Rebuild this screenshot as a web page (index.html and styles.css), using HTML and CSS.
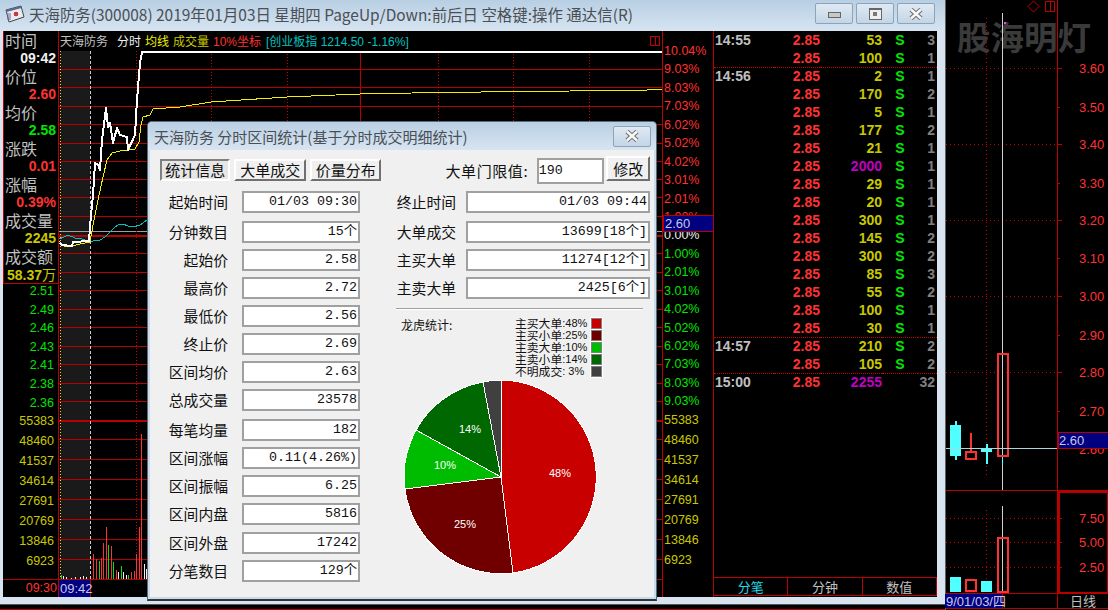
FILE: index.html
```html
<!DOCTYPE html>
<html lang="zh-CN">
<head>
  <meta charset="UTF-8">
  <title>天海防务 分时区间统计</title>
  <link rel="stylesheet" href="styles.css">
</head>
<body>
<div class="page">
  <div class="left-part">
    <div class="window">
      <div class="titlebar">
        <svg class="app-icon" width="20" height="18" viewBox="0 0 20 18">
          <path d="M1 5 L16 1 L19 12 L4 17 Z" fill="#e8e8f0" stroke="#444"/>
          <path d="M1 5 L16 1 L16.6 3 L1.6 7 Z" fill="#5a6a90"/>
          <circle cx="11" cy="9" r="3" fill="#c04040" stroke="#fff"/>
          <path d="M3 8v7M5 8v7" stroke="#6070a0"/>
        </svg>
        <span class="title-text">天海防务(300008) 2019年01月03日 星期四 PageUp/Down:前后日 空格键:操作 通达信(R)</span>
        <div class="win-btns">
          <div class="win-btn"><i class="glyph-min"></i></div>
          <div class="win-btn"><i class="glyph-max"></i></div>
          <div class="win-btn">
            <svg width="14" height="12" viewBox="0 0 14 12"><path d="M2 1.5 L12 10.5 M12 1.5 L2 10.5" stroke="#666" stroke-width="4.4"/><path d="M2 1.5 L12 10.5 M12 1.5 L2 10.5" stroke="#f8f8f8" stroke-width="2.6"/></svg>
          </div>
        </div>
      </div>

      <div class="client">
        <div class="side">
          <div class="quote">
            <div class="q-label">时间</div><div class="q-val white">09:42</div>
            <div class="q-label">价位</div><div class="q-val red">2.60</div>
            <div class="q-label">均价</div><div class="q-val green">2.58</div>
            <div class="q-label">涨跌</div><div class="q-val red">0.01</div>
            <div class="q-label">涨幅</div><div class="q-val red">0.39%</div>
            <div class="q-label">成交量</div><div class="q-val olive">2245</div>
            <div class="q-label">成交额</div><div class="q-val olive">58.37<span class="wan">万</span></div>
          </div>
          <ul class="scale">
            <li class="green">2.51</li><li class="green">2.49</li><li class="green">2.46</li><li class="green">2.43</li><li class="green">2.41</li><li class="green">2.38</li><li class="green">2.36</li>
            <li class="olive v">55383</li><li class="olive v">48460</li><li class="olive v">41537</li><li class="olive v">34614</li><li class="olive v">27691</li><li class="olive v">20769</li><li class="olive v">13846</li><li class="olive v">6923</li>
          </ul>
          <div class="time-left">09:30</div>
        </div>

        <svg class="chart" width="604" height="566" viewBox="59 31 604 566" shape-rendering="crispEdges">
          <rect x="60" y="51" width="30" height="528" fill="#1a1a1a"/>
          <!-- price grid -->
          <g stroke="#b80000" stroke-width="1">
            <path d="M59 69.5H662M59 87.5H662M59 106.5H662M59 124.5H662M59 143.5H662M59 161.5H662M59 179.5H662M59 197.5H662M59 216.5H662"/>
            <path d="M59 253.5H662M59 272.5H662M59 290.5H662M59 309.5H662M59 327.5H662M59 346.5H662M59 364.5H662M59 383.5H662M59 401.5H662"/>
            <path d="M59 439.5H662M59 459.5H662M59 479.5H662M59 499.5H662M59 519.5H662M59 539.5H662M59 559.5H662"/>
          </g>
          <path d="M59 235.5H662M59 420.5H662" stroke="#b80000" stroke-width="2"/>
          <path d="M59 231.5H662" stroke="#a0a0a0"/>
          <!-- time grid -->
          <g stroke="#d00000" stroke-dasharray="1 2">
            <path d="M136.5 51V579M211.5 51V579M287.5 51V579M438.5 51V579M513.5 51V579M589.5 51V579"/>
          </g>
          <path d="M360.5 51V579" stroke="#b80000"/>
          <path d="M60.5 51V579" stroke="#e0e040" stroke-dasharray="1 2"/>
          <path d="M90.5 51V579" stroke="#c8c8e0" stroke-dasharray="3 2"/>
          <path d="M662.5 31V597" stroke="#c00000"/>
          <path d="M59 579.5H662" stroke="#b80000"/>
          <path d="M90.5 579V597" stroke="#c00000"/>
          <!-- volume bars -->
          <g stroke-width="1">
            <path stroke="#ff3232" d="M93.5 579V554M96.5 579V559M101.5 579V558M103.5 579V543M106.5 579V527M111.5 579V546M116.5 579V570M131.5 579V572M134.5 579V571M136.5 579V554M139.5 579V527M141.5 579V434"/>
            <path stroke="#00e600" d="M61.5 579V575M99.5 579V561M108.5 579V545M113.5 579V562M121.5 579V566M128.5 579V575"/>
            <path stroke="#f0f0f0" d="M63.5 579V576M66.5 579V577M71.5 579V578M75.5 579V577M80.5 579V577M83.5 579V576M86.5 579V577M118.5 579V572M123.5 579V572M126.5 579V575M144.5 579V564M146.5 579V569"/>
          </g>
          <g fill="none" stroke-linejoin="round">
            <path stroke="#00c0c0" d="M59 239L64 237L68 235L75 238L82 239L90 241.5L100 240L105 237L110 232L115 227L118 225L123 224L128 226L133 227L140 225L147 220"/>
            <path stroke="#f0f000" d="M59 241L65 247L72 246L80 244L90 242L93 225L98 200L103 177L107 160L112 153L120 151L135 149L139 142L141 125L143 117L150 115L153 109L180 107L211 102L287 97L360 94L438 92.5L570 91L640 90.5L662 89"/>
            <path stroke="#fff" stroke-width="2" d="M60 243L62 245L72 246L73 242L89 241L91 215L93 195L95 163L98 165L100 170L102 140L106 108L108 127L110 123L113 143L117 128L120 135L127 137L128 150L135 135L137 100L140 63L142 52L662 52"/>
          </g>
          <!-- header -->
          <g class="chart-head" shape-rendering="auto">
            <text x="60" y="46" fill="#c0c0c0">天海防务</text>
            <text x="117" y="46" fill="#f0f0f0">分时</text>
            <text x="145" y="46" fill="#f0f000">均线</text>
            <text x="173" y="46" fill="#c8c800">成交量</text>
            <text x="213" y="46" fill="#ff3232">10%坐标</text>
            <text x="266" y="46" fill="#00c0c0">[创业板指 1214.50 -1.16%]</text>
          </g>
          <rect x="650.5" y="36.5" width="9" height="9" fill="none" stroke="#c00000"/>
          <path d="M655.5 36V46" stroke="#c00000"/>
          <rect x="59" y="580" width="31" height="17" fill="#000080"/>
          <text class="time-cur" x="60" y="593" shape-rendering="auto">09:42</text>
        </svg>

        <ul class="axis">
          <li class="red">10.04%</li><li class="red">9.03%</li><li class="red">8.03%</li><li class="red">7.03%</li><li class="red">6.02%</li><li class="red">5.02%</li><li class="red">4.02%</li><li class="red">3.01%</li><li class="red">2.01%</li><li class="red">1.00%</li>
          <li class="white">0.00%</li>
          <li class="green">1.00%</li><li class="green">2.01%</li><li class="green">3.01%</li><li class="green">4.02%</li><li class="green">5.02%</li><li class="green">6.02%</li><li class="green">7.03%</li><li class="green">8.03%</li><li class="green">9.03%</li>
          <li class="olive v">55383</li><li class="olive v">48460</li><li class="olive v">41537</li><li class="olive v">34614</li><li class="olive v">27691</li><li class="olive v">20769</li><li class="olive v">13846</li><li class="olive v">6923</li>
        </ul>
        <div class="cur-price axis-price">2.60</div>

        <div class="ticks">
          <table class="tick-table">
            <tr><td class="t">14:55</td><td class="p">2.85</td><td class="n">53</td><td class="s">S</td><td class="c">3</td></tr>
            <tr class="sep"><td class="t"></td><td class="p">2.85</td><td class="n">100</td><td class="s">S</td><td class="c">1</td></tr>
            <tr><td class="t">14:56</td><td class="p">2.85</td><td class="n">2</td><td class="s">S</td><td class="c">1</td></tr>
            <tr><td class="t"></td><td class="p">2.85</td><td class="n">170</td><td class="s">S</td><td class="c">2</td></tr>
            <tr><td class="t"></td><td class="p">2.85</td><td class="n">5</td><td class="s">S</td><td class="c">1</td></tr>
            <tr><td class="t"></td><td class="p">2.85</td><td class="n">177</td><td class="s">S</td><td class="c">2</td></tr>
            <tr><td class="t"></td><td class="p">2.85</td><td class="n">21</td><td class="s">S</td><td class="c">1</td></tr>
            <tr><td class="t"></td><td class="p">2.85</td><td class="n big">2000</td><td class="s">S</td><td class="c">1</td></tr>
            <tr><td class="t"></td><td class="p">2.85</td><td class="n">29</td><td class="s">S</td><td class="c">1</td></tr>
            <tr><td class="t"></td><td class="p">2.85</td><td class="n">20</td><td class="s">S</td><td class="c">1</td></tr>
            <tr><td class="t"></td><td class="p">2.85</td><td class="n">300</td><td class="s">S</td><td class="c">1</td></tr>
            <tr><td class="t"></td><td class="p">2.85</td><td class="n">145</td><td class="s">S</td><td class="c">2</td></tr>
            <tr><td class="t"></td><td class="p">2.85</td><td class="n">300</td><td class="s">S</td><td class="c">2</td></tr>
            <tr><td class="t"></td><td class="p">2.85</td><td class="n">85</td><td class="s">S</td><td class="c">3</td></tr>
            <tr><td class="t"></td><td class="p">2.85</td><td class="n">55</td><td class="s">S</td><td class="c">2</td></tr>
            <tr><td class="t"></td><td class="p">2.85</td><td class="n">100</td><td class="s">S</td><td class="c">1</td></tr>
            <tr class="sep"><td class="t"></td><td class="p">2.85</td><td class="n">30</td><td class="s">S</td><td class="c">1</td></tr>
            <tr><td class="t">14:57</td><td class="p">2.85</td><td class="n">210</td><td class="s">S</td><td class="c">2</td></tr>
            <tr class="sep"><td class="t"></td><td class="p">2.85</td><td class="n">105</td><td class="s">S</td><td class="c">2</td></tr>
            <tr><td class="t">15:00</td><td class="p">2.85</td><td class="n big">2255</td><td class="s"></td><td class="c">32</td></tr>
          </table>
          <div class="tick-tabs">
            <div class="tick-tab on">分笔</div>
            <div class="tick-tab">分钟</div>
            <div class="tick-tab">数值</div>
          </div>
        </div>
      </div>

      <div class="dlg">
        <div class="dlg-title">
          <span>天海防务 分时区间统计(基于分时成交明细统计)</span>
          <div class="dlg-close">
            <svg width="16" height="12" viewBox="0 0 16 12"><path d="M3 1.5 L13 10.5 M13 1.5 L3 10.5" stroke="#666" stroke-width="4.4"/><path d="M3 1.5 L13 10.5 M13 1.5 L3 10.5" stroke="#f8f8f8" stroke-width="2.6"/></svg>
          </div>
        </div>
        <div class="dlg-body">
          <div class="dlg-top">
            <button class="tab active">统计信息</button>
            <button class="tab">大单成交</button>
            <button class="tab">价量分布</button>
            <span class="limit-label">大单门限值:</span>
            <div class="limit-input">190</div>
            <button class="tab modify">修改</button>
          </div>
          <div class="dlg-cols">
            <div class="col-left">
              <div class="row"><label>起始时间</label><div class="val">01/03 09:30</div></div>
              <div class="row"><label>分钟数目</label><div class="val">15个</div></div>
              <div class="row"><label>起始价</label><div class="val">2.58</div></div>
              <div class="row"><label>最高价</label><div class="val">2.72</div></div>
              <div class="row"><label>最低价</label><div class="val">2.56</div></div>
              <div class="row"><label>终止价</label><div class="val">2.69</div></div>
              <div class="row"><label>区间均价</label><div class="val">2.63</div></div>
              <div class="row"><label>总成交量</label><div class="val">23578</div></div>
              <div class="row"><label>每笔均量</label><div class="val">182</div></div>
              <div class="row"><label>区间涨幅</label><div class="val">0.11(4.26%)</div></div>
              <div class="row"><label>区间振幅</label><div class="val">6.25</div></div>
              <div class="row"><label>区间内盘</label><div class="val">5816</div></div>
              <div class="row"><label>区间外盘</label><div class="val">17242</div></div>
              <div class="row"><label>分笔数目</label><div class="val">129个</div></div>
            </div>
            <div class="col-right">
              <div class="row"><label>终止时间</label><div class="val">01/03 09:44</div></div>
              <div class="row"><label>大单成交</label><div class="val">13699[18个]</div></div>
              <div class="row"><label>主买大单</label><div class="val">11274[12个]</div></div>
              <div class="row"><label>主卖大单</label><div class="val">2425[6个]</div></div>
              <div class="divider"></div>
              <div class="dragon">
                <div class="dragon-title">龙虎统计:</div>
                <ul class="legend">
                  <li>主买大单<span class="pct">:48%</span><i class="sw s1"></i></li>
                  <li>主买小单<span class="pct">:25%</span><i class="sw s2"></i></li>
                  <li>主卖大单<span class="pct">:10%</span><i class="sw s3"></i></li>
                  <li>主卖小单<span class="pct">:14%</span><i class="sw s4"></i></li>
                  <li>不明成交<span class="pct">: 3%</span><i class="sw s5"></i></li>
                </ul>
              </div>
              <svg class="pie" width="200" height="200" viewBox="401 378 200 200" shape-rendering="crispEdges">
                <g stroke="#fff" stroke-width="1">
                  <path fill="#c80000" d="M501 478V381A97 97 0 0 1 513 574Z"/>
                  <path fill="#700000" d="M501 478L513 574A97 97 0 0 1 405 490Z"/>
                  <path fill="#00bc00" d="M501 478L405 490A97 97 0 0 1 416 431Z"/>
                  <path fill="#006800" d="M501 478L416 431A97 97 0 0 1 483 383Z"/>
                  <path fill="#404040" d="M501 478L483 383A97 97 0 0 1 501 381Z"/>
                </g>
                <g class="pie-label" shape-rendering="auto">
                  <text x="549" y="478">48%</text>
                  <text x="454" y="529">25%</text>
                  <text x="434" y="470">10%</text>
                  <text x="459" y="434">14%</text>
                </g>
              </svg>
            </div>
          </div>
        </div>
      </div>
    </div>
    <div class="bottom-strip"></div>
  </div>

  <svg class="day-chart" width="163" height="610" viewBox="945 0 163 610" shape-rendering="crispEdges">
    <path d="M945.5 0V610" stroke="#606060"/>
    <text class="watermark" x="957" y="50" shape-rendering="auto">股海明灯</text>
    <g stroke="#d00000" stroke-dasharray="1 3">
      <path d="M946 68.5H1057M946 144.5H1057M946 220.5H1057M946 296.5H1057M946 372.5H1057M946 518.5H1057M946 542.5H1057M946 567.5H1057"/>
      <path d="M986.5 18V478M986.5 510V592"/>
    </g>
    <path d="M1002.5 13V490M1002.5 506V593" stroke="#d0d0d0"/>
    <rect x="1004" y="22" width="2" height="2" fill="#ff40ff"/>
    <!-- candles -->
    <path d="M955.5 421V460" stroke="#50ffff" stroke-width="2"/>
    <rect x="950" y="425" width="11" height="31" fill="#50ffff"/>
    <path d="M971 433V451" stroke="#ff3232" stroke-width="2"/>
    <rect x="966" y="452" width="10" height="7" fill="#000" stroke="#ff3232" stroke-width="2"/>
    <path d="M986.5 444V464" stroke="#50ffff" stroke-width="2"/>
    <rect x="981" y="449" width="11" height="3" fill="#50ffff"/>
    <path d="M1002 456V464" stroke="#50ffff" stroke-width="1"/>
    <rect x="997.5" y="353.5" width="10" height="102" fill="none" stroke="#ff3232" stroke-width="2"/>
    <path d="M946 448.5H1057" stroke="#a8d8d8"/>
    <!-- volume -->
    <rect x="950" y="577" width="11" height="15" fill="#50ffff"/>
    <rect x="966" y="580" width="10" height="11" fill="none" stroke="#ff3232" stroke-width="2"/>
    <rect x="981" y="581" width="11" height="11" fill="#50ffff"/>
    <rect x="997.5" y="537.5" width="10" height="54" fill="none" stroke="#ff3232" stroke-width="2"/>
    <!-- frames -->
    <path d="M1057.5 0V593" stroke="#c00000"/>
    <path d="M946 490.5H1108" stroke="#b80000"/>
    <path d="M946 593.5H1108" stroke="#b80000"/>
    <path d="M946 608.5H1108" stroke="#b80000"/>
    <path d="M1002.5 593V608M1057.5 593V608" stroke="#b80000"/>
    <rect x="1058.5" y="491.5" width="49" height="101" fill="none" stroke="#b80000" stroke-width="2"/>
    <path d="M1057 68.5H1062M1057 107.5H1060M1057 144.5H1062M1057 183.5H1060M1057 220.5H1062M1057 258.5H1060M1057 296.5H1062M1057 335.5H1060M1057 372.5H1062M1057 411.5H1060M1057 518.5H1062M1057 542.5H1062M1057 567.5H1062" stroke="#c00000"/>
    <g class="day-axis" shape-rendering="auto">
      <text x="1079" y="73">3.60</text><text x="1079" y="112">3.50</text><text x="1079" y="149">3.40</text>
      <text x="1079" y="188">3.30</text><text x="1079" y="225">3.20</text><text x="1079" y="263">3.10</text>
      <text x="1079" y="301">3.00</text><text x="1079" y="340">2.90</text><text x="1079" y="377">2.80</text>
      <text x="1079" y="416">2.70</text><text x="1079" y="454">2.60</text>
      <text x="1079" y="523">7.50</text><text x="1079" y="547">5.00</text><text x="1079" y="572">2.50</text>
    </g>
    <rect x="1058" y="432.5" width="50" height="16" fill="#000080" stroke="#b80000"/>
    <text class="box-text" x="1059" y="445" shape-rendering="auto">2.60</text>
    <rect x="945" y="594" width="57" height="14" fill="#000080"/>
    <text class="box-text" x="946" y="606" shape-rendering="auto">9/01/03/四</text>
    <text class="day-tab" x="1070" y="606" shape-rendering="auto">日线</text>
    <path d="M1033.5 1L1039 6.5L1033.5 12L1028 6.5Z" fill="none" stroke="#c00000" shape-rendering="auto"/>
    <rect x="1045.5" y="1.5" width="9" height="10" fill="none" stroke="#c00000"/>
    <path d="M1050.5 1V12" stroke="#c00000"/>
  </svg>
</div>
</body>
</html>
```

FILE: styles.css
```css
* {
  box-sizing: border-box;
}
html, body {
  margin: 0;
  padding: 0;
  background: #000;
  overflow: hidden;
}
body {
  width: 1108px;
  height: 610px;
  font-family: "Noto Sans CJK SC", "Liberation Sans", sans-serif;
}
ul {
  list-style: none;
  margin: 0;
  padding: 0;
}
svg {
  display: block;
}
.page {
  display: flex;
  height: 610px;
}
.left-part {
  width: 945px;
}
.day-chart {
  flex: none;
}

.red { color: #ff3232; }
.green { color: #00e600; }
.white { color: #f0f0f0; }
.olive { color: #c8c800; }

/* main window */
.window {
  position: relative;
  width: 945px;
  height: 604px;
  padding: 0 8px 7px 3px;
  background: #d8e4f0;
  display: flex;
  flex-direction: column;
}
.bottom-strip {
  height: 6px;
  background: #000;
  border-top: 1px solid #555;
  border-bottom: 1px solid #b80000;
}
.titlebar {
  height: 31px;
  margin: 0 -8px 0 -3px;
  padding: 0 10px 4px 5px;
  background: linear-gradient(#b8cfe3, #d6e4f1);
  display: flex;
  align-items: center;
}
.app-icon {
  flex: none;
  margin-right: 4px;
}
.title-text {
  font-size: 15.45px;
  color: #4a4f55;
  white-space: nowrap;
}
.win-btns {
  margin-left: auto;
  display: flex;
  gap: 3px;
}
.win-btn {
  width: 38px;
  height: 21px;
  border: 1px solid #8da3ba;
  border-radius: 2px;
  background: linear-gradient(#dfe9f3, #c4d5e6);
  display: flex;
  align-items: center;
  justify-content: center;
}
.glyph-min {
  display: block;
  width: 13px;
  height: 6px;
  margin-top: 3px;
  background: #c8c8c8;
  border: 1px solid #666;
}
.glyph-max {
  display: flex;
  align-items: center;
  justify-content: center;
  width: 13px;
  height: 12px;
  border: 1px solid #666;
  border-top-width: 2px;
  background: #eee;
}
.glyph-max::after {
  content: "";
  width: 4px;
  height: 4px;
  background: #777;
}

.client {
  position: relative;
  flex: 1;
  display: flex;
  background: #000;
}

/* left quote column */
.side {
  width: 56px;
  flex: none;
  position: relative;
  border-right: 1px solid #c00000;
}
.quote {
  height: 253px;
  border-left: 1px solid #c00000;
  border-bottom: 1px solid #c00000;
}
.q-label {
  height: 18px;
  line-height: 18px;
  padding-left: 1px;
  font-size: 16px;
  color: #c0c0c0;
  white-space: nowrap;
}
.q-val {
  height: 18px;
  line-height: 18px;
  padding-right: 2px;
  text-align: right;
  font-family: "Liberation Sans", sans-serif;
  font-weight: 700;
  font-size: 14px;
  white-space: nowrap;
}
.wan {
  font-family: "Noto Sans CJK SC", sans-serif;
  font-weight: 400;
}
.scale {
  font-family: "Liberation Sans", sans-serif;
  font-size: 12.5px;
  text-align: right;
  padding-right: 4px;
}
.scale li {
  height: 18.6px;
  line-height: 14px;
}
.scale li.v {
  height: 20px;
}
.time-left {
  position: absolute;
  left: 0;
  right: 0;
  bottom: 0;
  height: 18px;
  border-top: 1px solid #b80000;
  text-align: right;
  padding-right: 1px;
  line-height: 17px;
  font-family: "Liberation Sans", sans-serif;
  font-size: 12.5px;
  color: #ff3232;
}

.chart {
  flex: none;
}
.chart-head text {
  font-family: "Liberation Sans", "Noto Sans CJK SC", sans-serif;
  font-size: 12px;
}
.time-cur {
  font-family: "Liberation Sans", sans-serif;
  font-size: 13px;
  fill: #c8c8e8;
}

/* right percent axis */
.axis {
  width: 50px;
  flex: none;
  padding: 13px 0 0 1px;
  font-family: "Liberation Sans", sans-serif;
  font-size: 12.5px;
  white-space: nowrap;
}
.axis li {
  height: 18.45px;
  line-height: 14px;
}
.axis li.v {
  height: 20px;
}
.cur-price {
  position: absolute;
  width: 51px;
  height: 17px;
  background: #000080;
  border: 1px solid #b80000;
  color: #c8c8e8;
  font-family: "Liberation Sans", sans-serif;
  font-size: 13px;
  line-height: 15px;
  padding-left: 1px;
}
.axis-price {
  left: 660px;
  top: 184px;
}

/* tick list */
.ticks {
  flex: 1;
  border-left: 1px solid #b80000;
  display: flex;
  flex-direction: column;
  justify-content: space-between;
}
.tick-table {
  border-collapse: collapse;
  width: 100%;
  font-family: "Liberation Sans", sans-serif;
  font-weight: 700;
  font-size: 14px;
}
.tick-table td {
  height: 18px;
  padding: 0;
  line-height: 16px;
}
.tick-table .sep td {
  border-bottom: 1px dotted #d00000;
}
.t { width: 60px; color: #c0c0c0; }
.tick-table td.t { padding-left: 1px; }
.p { width: 46px; color: #ff3232; text-align: right; }
.n { width: 62px; color: #c8c800; text-align: right; }
.n.big { color: #c000c0; }
.s { width: 36px; color: #00e600; text-align: center; }
.c { color: #808080; text-align: right; }
.tick-table td.c { padding-right: 2px; }
.tick-tabs {
  height: 19px;
  margin-bottom: 1px;
  display: flex;
  border-top: 1px solid #c00000;
  border-bottom: 1px solid #c00000;
}
.tick-tab {
  flex: 1;
  text-align: center;
  font-size: 13px;
  line-height: 17px;
  color: #c0c0c0;
  border-right: 1px solid #c00000;
}
.tick-tab.on {
  color: #20d8e8;
}

/* statistics dialog */
.dlg {
  position: absolute;
  left: 147px;
  top: 121px;
  width: 510px;
  height: 480px;
  background: #c8dcec;
  border: 1px solid #5a6a78;
  border-bottom: 2px solid #333;
  border-radius: 5px 5px 0 0;
  padding: 0 2px 2px 2px;
  display: flex;
  flex-direction: column;
}
.dlg-title {
  height: 28px;
  margin: 0 -2px;
  padding: 0 5px 0 6px;
  background: linear-gradient(#b9cfe3, #d8e5f2);
  border-radius: 4px 4px 0 0;
  display: flex;
  align-items: center;
  justify-content: space-between;
  font-size: 15px;
  color: #4a4f55;
}
.dlg-close {
  width: 38px;
  height: 21px;
  border: 1px solid #8da3ba;
  border-radius: 2px;
  background: linear-gradient(#dfe9f3, #c4d5e6);
  display: flex;
  align-items: center;
  justify-content: center;
}
.dlg-body {
  flex: 1;
  background: #f0f0f0;
  padding: 6px 4px 0 10px;
  color: #111;
}
.dlg-top {
  height: 35px;
  display: flex;
  align-items: flex-start;
  gap: 4px;
}
.tab {
  width: 72px;
  height: 22px;
  margin-top: 3px;
  padding: 0;
  font-family: "Noto Sans CJK SC", sans-serif;
  font-size: 15px;
  line-height: 18px;
  color: #111;
  background: #f0f0f0;
  border: 2px solid;
  border-color: #fff #707070 #707070 #fff;
}
.tab.active {
  width: 71px;
  background: #e6e6e6;
  border-color: #808080 #fff #fff #808080;
}
.limit-label {
  margin: 4px 0 0 60px;
  width: 86px;
  font-size: 15px;
  letter-spacing: 0.6px;
  white-space: nowrap;
}
.limit-input {
  width: 68px;
  height: 26px;
  margin-top: 2px;
  margin-left: 2px;
  background: #fff;
  border: 2px solid #a0a0a0;
  font-family: "Liberation Mono", monospace;
  font-size: 13.33px;
  line-height: 21px;
}
.tab.modify {
  width: 44px;
  height: 25px;
  margin: 0 0 0 -2px;
}
.dlg-cols {
  display: flex;
}
.col-left {
  width: 200px;
}
.col-right {
  width: 254px;
  margin-left: 36px;
}
.row {
  display: flex;
  height: 22px;
  margin-bottom: 6px;
}
.row:first-child,
.col-left .row:nth-child(8) {
  margin-bottom: 8px;
}
.col-left .row:nth-child(12) {
  margin-bottom: 7px;
}
.row label {
  font-size: 14.8px;
  line-height: 21px;
  text-align: right;
  white-space: nowrap;
}
.col-left label {
  width: 68px;
  margin-right: 14px;
}
.col-right label {
  width: 60px;
  margin-right: 10px;
}
.val {
  flex: 1;
  background: #fff;
  border: 2px solid #a0a0a0;
  font-family: "Liberation Mono", "Noto Sans CJK SC", monospace;
  font-size: 13.33px;
  line-height: 18px;
  text-align: right;
  padding-right: 1px;
  white-space: nowrap;
}
.divider {
  height: 2px;
  width: 247px;
  margin: 9px 0 0 0;
  background: #a0a0a0;
  border-bottom: 1px solid #fff;
}
.dragon {
  display: flex;
  height: 67px;
  padding-top: 7px;
  margin-left: 5px;
}
.dragon-title {
  width: 114px;
  font-size: 12px;
  line-height: 16px;
}
.legend li {
  display: flex;
  align-items: center;
  height: 12px;
  font-size: 11.8px;
  line-height: 12px;
  white-space: nowrap;
}
.pct {
  width: 26px;
  font-family: "Liberation Sans", sans-serif;
  font-size: 11px;
  white-space: pre;
}
.sw {
  display: block;
  width: 11px;
  height: 11px;
  margin-left: 3px;
  border: 1px solid #808080;
  box-shadow: 0 0 0 1px #fff;
}
.s1 { background: #c80000; }
.s2 { background: #700000; }
.s3 { background: #00bc00; }
.s4 { background: #006800; }
.s5 { background: #404040; }
.pie {
  margin: 0 0 0 5px;
}
.pie-label text {
  font-family: "Liberation Sans", sans-serif;
  font-size: 11px;
  fill: #fff;
}

/* daily chart on the right */
.watermark {
  font-size: 33.5px;
  font-weight: 700;
  fill: #3a3a3a;
}
.day-axis text {
  font-family: "Liberation Sans", sans-serif;
  font-size: 13px;
  fill: #ff3232;
}
.box-text {
  font-family: "Liberation Sans", sans-serif;
  font-size: 13px;
  fill: #c8c8e8;
}
.day-tab {
  font-size: 13px;
  fill: #c0c0c0;
}
```
